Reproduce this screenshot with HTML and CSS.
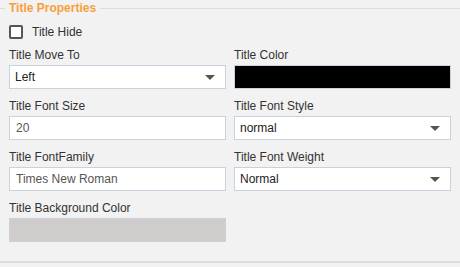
FILE: index.html
```html
<!DOCTYPE html>
<html lang="en">
<head>
  <meta charset="UTF-8">
  <title>Title Properties</title>
  <link rel="stylesheet" href="styles.css">
</head>
<body>
  <fieldset class="props">
    <legend>Title Properties</legend>
    <label class="check-row">
      <input type="checkbox">
      <span>Title Hide</span>
    </label>
    <div class="grid">
      <div class="field">
        <label>Title Move To</label>
        <div class="select-wrap">
          <select>
            <option>Left</option>
            <option>Center</option>
            <option>Right</option>
          </select>
        </div>
      </div>
      <div class="field">
        <label>Title Color</label>
        <div class="swatch swatch-black"></div>
      </div>
      <div class="field">
        <label>Title Font Size</label>
        <input type="text" value="20">
      </div>
      <div class="field">
        <label>Title Font Style</label>
        <div class="select-wrap">
          <select>
            <option>normal</option>
            <option>italic</option>
          </select>
        </div>
      </div>
      <div class="field">
        <label>Title FontFamily</label>
        <input type="text" value="Times New Roman">
      </div>
      <div class="field">
        <label>Title Font Weight</label>
        <div class="select-wrap">
          <select>
            <option>Normal</option>
            <option>Bold</option>
          </select>
        </div>
      </div>
      <div class="field">
        <label>Title Background Color</label>
        <div class="swatch swatch-grey"></div>
      </div>
    </div>
  </fieldset>
</body>
</html>
```

FILE: styles.css
```css
:root {
  --bg: #f2f2f2;
  --line: #dcdcdc;
  --accent: #f7a03a;      /* orange legend */
  --text: #333333;
  --field-border: #c8d2de;
  --font: 'Liberation Sans', Arial, sans-serif;
}

*, *::before, *::after {
  box-sizing: border-box;
}

body {
  margin: 0;
  background: var(--bg);
  font-family: var(--font);
  font-size: 12px;
  color: var(--text);
}

.props {
  margin: 0;
  padding: 0 9px 19px;
  border: none;
  border-top: 1px solid var(--line);
  border-bottom: 2px solid var(--line);
}

.props legend {
  margin-left: -4px;
  padding: 0 4px;
  font-weight: bold;
  font-size: 12px;
  line-height: 17px;
  color: var(--accent);
}

.check-row {
  display: flex;
  align-items: center;
  gap: 9px;
  margin-top: 7px;
  line-height: 16px;
}

.check-row input {
  appearance: none;
  margin: 0;
  width: 14px;
  height: 14px;
  border: 2px solid #555;
  border-radius: 2px;
  background: #fff;
}

.grid {
  display: grid;
  grid-template-columns: 217px 217px;
  column-gap: 8px;
  row-gap: 10px;
  margin-top: 8px;
}

.field label {
  display: block;
  line-height: 14px;
  margin-bottom: 3px;
}

.field input,
.field select,
.swatch {
  display: block;
  width: 100%;
  height: 24px;
  border: 1px solid var(--field-border);
  border-radius: 0;
  font-family: var(--font);
  font-size: 12px;
}

.field input {
  padding: 0 6px;
  background: #fff;
  color: #555;
  outline: none;
}

.select-wrap {
  position: relative;
}

.field select {
  appearance: none;
  padding: 0 5px;
  background: #fff;
  color: #222;
  outline: none;
}

.select-wrap::after {
  content: "";
  position: absolute;
  right: 11px;
  top: 10px;
  border-left: 5px solid transparent;
  border-right: 5px solid transparent;
  border-top: 5px solid #555;
  pointer-events: none;
}

.swatch-black { background: #000; }
.swatch-grey { background: #d0cccb; }
```
